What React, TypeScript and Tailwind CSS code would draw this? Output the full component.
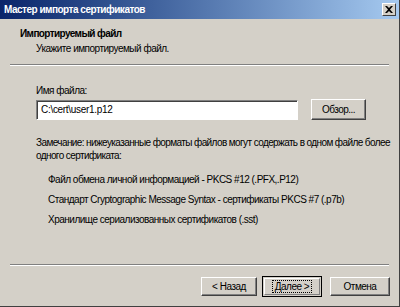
export default function App() {
  const formats = [
    'Файл обмена личной информацией - PKCS #12 (.PFX,.P12)',
    'Стандарт Cryptographic Message Syntax - сертификаты PKCS #7 (.p7b)',
    'Хранилище сериализованных сертификатов (.sst)',
  ];

  return (
    <div
      className="w-[400px] h-[307px] bg-[#d4d0c8] text-black text-[10px] tracking-[-0.5px] leading-[13px] flex flex-col border-r border-b border-[#404040] overflow-hidden"
      style={{ fontFamily: '"Liberation Sans", Arial, sans-serif' }}
    >
      {/* Title bar */}
      <div className="h-[19px] shrink-0 flex items-center justify-between pl-[4px] pr-[3px] bg-gradient-to-r from-[#0a246a] to-[#a6caf0]">
        <span className="text-white font-bold text-[10px] tracking-[-0.5px]">Мастер импорта сертификатов</span>
        <button className="w-[14px] h-[13px] bg-[#d4d0c8] border border-t-white border-l-white border-r-[#404040] border-b-[#404040] flex items-center justify-center">
          <svg width="8" height="7" viewBox="0 0 8 7">
            <path d="M0 0 L2 0 L4 2 L6 0 L8 0 L5 3.5 L8 7 L6 7 L4 5 L2 7 L0 7 L3 3.5 Z" fill="#000" />
          </svg>
        </button>
      </div>

      {/* Header */}
      <div className="pl-[20px] pt-[8px] pb-[9px]">
        <div className="font-bold tracking-[-0.6px]">Импортируемый файл</div>
        <div className="pl-[16px] mt-[2px]">Укажите импортируемый файл.</div>
      </div>
      <div className="mx-[10px] border-t border-[#808080] border-b border-b-white" />

      {/* Body */}
      <div className="pl-[36px] pr-[8px] pt-[18px] flex-1">
        <div>Имя файла:</div>
        <div className="flex items-center mt-[2px] gap-[13px]">
          <div className="w-[262px] h-[20px] bg-white border border-t-[#808080] border-l-[#808080] border-r-white border-b-white shadow-[inset_1px_1px_0_#404040] flex items-center pl-[4px] tracking-[-0.3px]">
            C:\cert\user1.p12
          </div>
          <button className="w-[55px] h-[21px] border border-t-white border-l-white border-r-[#404040] border-b-[#404040] shadow-[inset_-1px_-1px_0_#808080]">
            Обзор...
          </button>
        </div>

        <div className="mt-[16px] whitespace-nowrap tracking-[-0.6px]">
          Замечание: нижеуказанные форматы файлов могут содержать в одном файле более
          <br />
          одного сертификата:
        </div>
        <div className="pl-[12px] mt-[11px] flex flex-col gap-[7px]">
          {formats.map((f) => (
            <div key={f}>{f}</div>
          ))}
        </div>
      </div>

      {/* Footer */}
      <div className="mx-[10px] border-t border-[#808080] border-b border-b-white" />
      <div className="flex justify-end items-center gap-[5px] pr-[9px] pt-[10px] pb-[9px]">
        <button className="w-[56px] h-[19px] border border-t-white border-l-white border-r-[#404040] border-b-[#404040] shadow-[inset_-1px_-1px_0_#808080]">
          &lt; Назад
        </button>
        <button className="w-[60px] h-[21px] border border-black p-[1px] mr-[3px]">
          <div className="w-full h-full border border-t-white border-l-white border-r-[#808080] border-b-[#808080] flex items-center justify-center">
            <span className="border border-dotted border-black px-[2px] leading-[11px]">Далее &gt;</span>
          </div>
        </button>
        <button className="w-[60px] h-[19px] border border-t-white border-l-white border-r-[#404040] border-b-[#404040] shadow-[inset_-1px_-1px_0_#808080]">
          Отмена
        </button>
      </div>
    </div>
  );
}
